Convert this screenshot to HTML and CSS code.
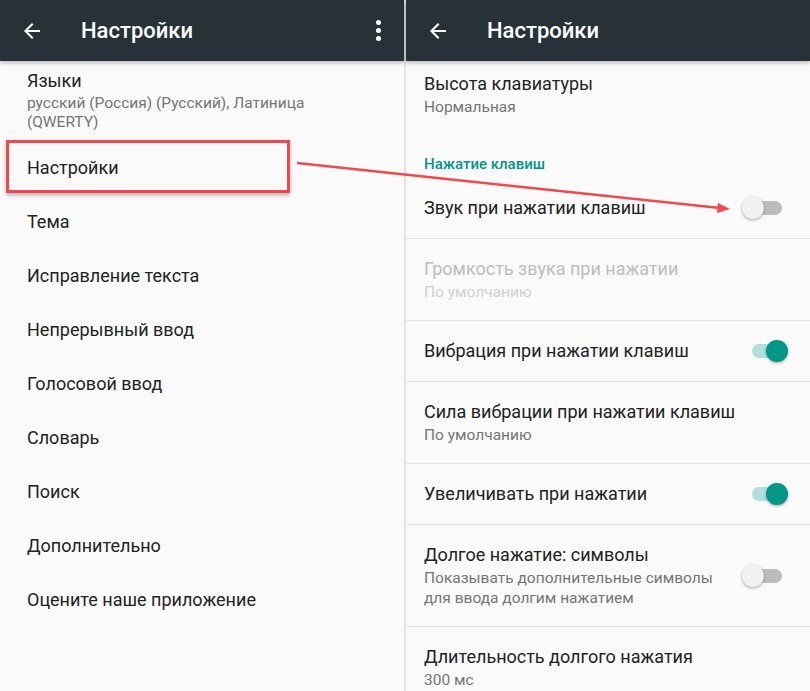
FILE: index.html
```html
<!DOCTYPE html>
<html lang="ru">
<head>
    <meta charset="UTF-8">
    <meta name="viewport" content="width=device-width, initial-scale=1.0">
    <title>Настройки</title>
    <link rel="stylesheet" href="styles.css">
</head>
<body>

<div class="screens">
    <!-- Left screen: keyboard settings menu -->
    <div class="screen">
        <div class="toolbar">
            <svg class="back" width="24" height="24" viewBox="0 0 24 24"><path d="M20 11H7.83l5.59-5.59L12 4l-8 8 8 8 1.41-1.41L7.83 13H20v-2z" fill="#fff"/></svg>
            <span class="toolbar-title">Настройки</span>
            <span class="menu-dots"><i></i><i></i><i></i></span>
        </div>
        <div class="menu">
            <div class="menu-lang">
                <div class="title">Языки</div>
                <div class="summary">русский (Россия) (Русский), Латиница<br>(QWERTY)</div>
            </div>
            <div class="menu-item marked">Настройки</div>
            <div class="menu-item">Тема</div>
            <div class="menu-item">Исправление текста</div>
            <div class="menu-item">Непрерывный ввод</div>
            <div class="menu-item">Голосовой ввод</div>
            <div class="menu-item">Словарь</div>
            <div class="menu-item">Поиск</div>
            <div class="menu-item">Дополнительно</div>
            <div class="menu-item">Оцените наше приложение</div>
        </div>
    </div>

    <!-- Right screen: settings details -->
    <div class="screen right">
        <div class="toolbar">
            <svg class="back" width="24" height="24" viewBox="0 0 24 24"><path d="M20 11H7.83l5.59-5.59L12 4l-8 8 8 8 1.41-1.41L7.83 13H20v-2z" fill="#fff"/></svg>
            <span class="toolbar-title">Настройки</span>
        </div>
        <div class="prefs">
            <div class="pref first">
                <div class="pref-text">
                    <div class="title">Высота клавиатуры</div>
                    <div class="summary">Нормальная</div>
                </div>
            </div>
            <div class="category">Нажатие клавиш</div>
            <div class="pref single divided">
                <div class="pref-text"><div class="title">Звук при нажатии клавиш</div></div>
                <span class="switch"><span class="track"></span><span class="thumb"></span></span>
            </div>
            <div class="pref divided disabled">
                <div class="pref-text">
                    <div class="title">Громкость звука при нажатии</div>
                    <div class="summary">По умолчанию</div>
                </div>
            </div>
            <div class="pref single divided">
                <div class="pref-text"><div class="title">Вибрация при нажатии клавиш</div></div>
                <span class="switch on"><span class="track"></span><span class="thumb"></span></span>
            </div>
            <div class="pref divided">
                <div class="pref-text">
                    <div class="title">Сила вибрации при нажатии клавиш</div>
                    <div class="summary">По умолчанию</div>
                </div>
            </div>
            <div class="pref single divided">
                <div class="pref-text"><div class="title">Увеличивать при нажатии</div></div>
                <span class="switch on"><span class="track"></span><span class="thumb"></span></span>
            </div>
            <div class="pref divided">
                <div class="pref-text">
                    <div class="title">Долгое нажатие: символы</div>
                    <div class="summary">Показывать дополнительные символы<br>для ввода долгим нажатием</div>
                </div>
                <span class="switch"><span class="track"></span><span class="thumb"></span></span>
            </div>
            <div class="pref">
                <div class="pref-text">
                    <div class="title">Длительность долгого нажатия</div>
                    <div class="summary">300 мс</div>
                </div>
            </div>
        </div>
    </div>
</div>

<!-- Annotation arrow drawn over both screens -->
<svg class="annotation" width="810" height="691" viewBox="0 0 810 691">
    <line x1="297" y1="163" x2="720" y2="208" stroke="#f2484b" stroke-width="2.5"/>
    <path d="M730 209 L718 203 L717 213 Z" fill="#f2484b"/>
</svg>

</body>
</html>
```

FILE: styles.css
```css
body {
    margin: 0;
    padding: 0;
    font-family: Roboto, 'Noto Sans', sans-serif;
    background-color: #fafafa;
    color: #222;
}

.screens {
    display: flex;
    width: 810px;
    height: 691px;
    overflow: hidden;
    background-color: #e2e2e2;
    gap: 2px;
}

.screen {
    width: 404px;
    background-color: #fafafa;
    display: flex;
    flex-direction: column;
}

.screen.right {
    flex: 1;
}

.toolbar {
    height: 61px;
    flex-shrink: 0;
    background-color: #263238;
    display: flex;
    align-items: center;
    color: white;
    box-shadow: 0 2px 4px rgba(0, 0, 0, 0.25);
    position: relative;
    z-index: 1;
}

.toolbar .back {
    margin-left: 20px;
}

.toolbar-title {
    margin-left: 37px;
    font-size: 22px;
    font-weight: 500;
    flex: 1;
}

.menu-dots {
    display: flex;
    flex-direction: column;
    gap: 3px;
    margin-right: 23px;
}

.menu-dots i {
    width: 5px;
    height: 5px;
    border-radius: 50%;
    background-color: white;
}

.title {
    font-size: 18px;
    line-height: 22px;
}

.summary {
    font-size: 15.5px;
    line-height: 19px;
    color: #757575;
}

/* Left menu */
.menu-lang {
    padding: 9px 27px 8px;
}

.menu-lang .summary {
    margin-top: 2px;
}

.menu-item {
    height: 54px;
    flex-shrink: 0;
    padding-left: 27px;
    display: flex;
    align-items: center;
    font-size: 18px;
    position: relative;
}

.menu-item.marked::after {
    content: '';
    position: absolute;
    left: 6px;
    top: 0;
    width: 278px;
    height: 47px;
    border: 3px solid #f2484b;
    box-shadow: 0 2px 4px rgba(0, 0, 0, 0.3);
}

/* Right preferences */
.pref {
    display: flex;
    align-items: center;
    justify-content: space-between;
    padding: 19px 22px 18px 18px;
}

.pref.first {
    padding-top: 12px;
    padding-bottom: 19px;
}

.pref.single {
    height: 60px;
    padding-top: 0;
    padding-bottom: 0;
}

.pref.divided {
    border-bottom: 1px solid #e2e2e2;
}

.pref .summary {
    margin-top: 2px;
    line-height: 20px;
}

.pref.disabled .title {
    color: #bdbdbd;
}

.pref.disabled .summary {
    color: #d0d0d0;
}

.category {
    padding: 18px 18px 4px;
    font-size: 15px;
    line-height: 20px;
    font-weight: 500;
    color: #009688;
}

/* Toggle switch */
.switch {
    position: relative;
    width: 46px;
    height: 24px;
    flex-shrink: 0;
}

.switch .track {
    position: absolute;
    left: 8px;
    top: 5px;
    width: 32px;
    height: 14px;
    border-radius: 7px;
    background-color: #bcbcbc;
}

.switch .thumb {
    position: absolute;
    left: 0;
    top: 1px;
    width: 22px;
    height: 22px;
    border-radius: 50%;
    background-color: #f1f1f1;
    box-shadow: 0 1px 3px rgba(0, 0, 0, 0.35);
}

.switch.on .track {
    left: 10px;
    background-color: #b2dfdb;
}

.switch.on .thumb {
    left: 24px;
    background-color: #009688;
}

.annotation {
    position: absolute;
    top: 0;
    left: 0;
    pointer-events: none;
}
```
